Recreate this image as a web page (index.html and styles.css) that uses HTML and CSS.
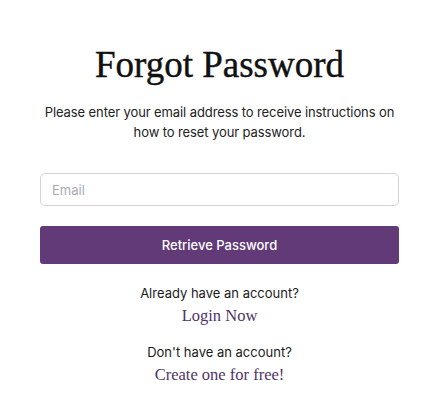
FILE: index.html
```html
<!DOCTYPE html>
<html lang="en">
<head>
<meta charset="utf-8">
<title>Forgot Password</title>
<link rel="stylesheet" href="styles.css">
</head>
<body>
<main class="page">
  <h1 class="title">Forgot Password</h1>
  <p class="intro">Please enter your email address to receive instructions on how to reset your password.</p>
  <form class="form">
    <input class="field" type="email" placeholder="Email">
    <button class="btn" type="button">Retrieve Password</button>
  </form>
  <div class="alt">
    <p class="alt-q">Already have an account?</p>
    <a class="alt-link" href="#">Login Now</a>
  </div>
  <div class="alt">
    <p class="alt-q">Don't have an account?</p>
    <a class="alt-link" href="#">Create one for free!</a>
  </div>
</main>
</body>
</html>
```

FILE: styles.css
```css
* { box-sizing: border-box; }
html, body { margin: 0; padding: 0; background: #fff; }
body { font-family: Inter, "Noto Sans", sans-serif; color: #1a1a1a; }
.page {
  padding: 43px 40px 0;
  display: flex;
  flex-direction: column;
  align-items: center;
  text-align: center;
}
.title {
  margin: 0;
  font-family: "Liberation Serif", "DejaVu Serif", serif;
  font-weight: 400;
  font-size: 37px;
  line-height: 44px;
  color: #111;
  -webkit-text-stroke: 0.4px #111;
}
.intro {
  margin: 15px 0 0;
  font-size: 13px;
  line-height: 20px;
  letter-spacing: -0.1px;
  color: #222;
  max-width: 360px;
}
.form {
  width: 100%;
  margin-top: 31px;
  display: flex;
  flex-direction: column;
  gap: 20px;
}
.field {
  width: 100%;
  height: 33px;
  border: 1px solid #d3d3dc;
  border-radius: 5px;
  padding: 0 11px;
  font-family: Inter, sans-serif;
  font-size: 13px;
  color: #333;
  outline: none;
}
.field::placeholder { color: #a9aab3; }
.btn {
  width: 100%;
  height: 38px;
  border: 0;
  border-radius: 3px;
  background: #623a78;
  color: #fff;
  font-family: Inter, sans-serif;
  font-size: 13px;
  font-weight: 500;
  cursor: pointer;
}
.alt { margin-top: 20px; display: flex; flex-direction: column; align-items: center; }
.alt + .alt { margin-top: 18px; }
.alt-q { margin: 0; font-size: 13px; line-height: 18px; color: #1a1a1a; }
.alt-link {
  margin-top: 5px;
  font-family: "Liberation Serif", "DejaVu Serif", serif;
  font-size: 16.5px;
  line-height: 18px;
  color: #4f3466;
  text-decoration: none;
}
```
